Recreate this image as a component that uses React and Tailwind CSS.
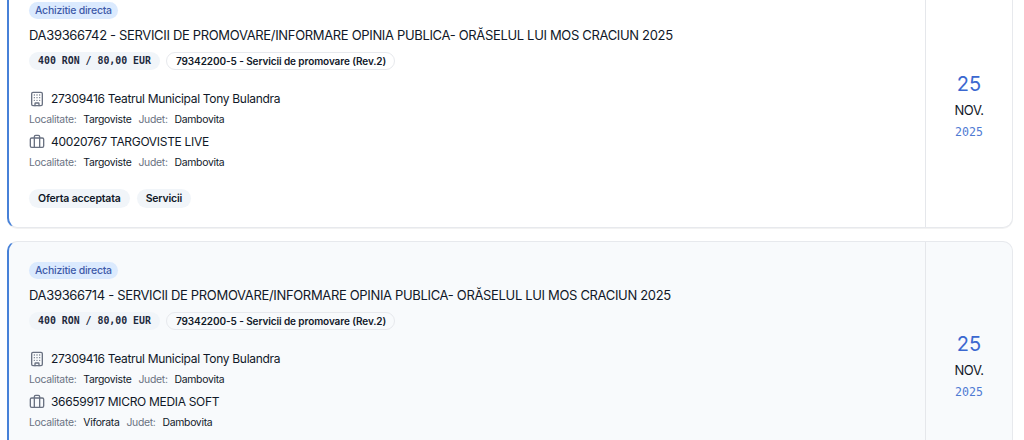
import React from "react";
import { Briefcase, Building } from "lucide-react";

const acquisitions = [
  {
    id: "DA39366742",
    title: "SERVICII DE PROMOVARE/INFORMARE OPINIA PUBLICA- ORĂSELUL LUI MOS CRACIUN 2025",
    authority: {
      name: "27309416 Teatrul Municipal Tony Bulandra",
      city: "Targoviste",
      county: "Dambovita",
    },
    supplier: {
      name: "40020767 TARGOVISTE LIVE",
      city: "Targoviste",
      county: "Dambovita",
    },
    tags: ["Oferta acceptata", "Servicii"],
  },
  {
    id: "DA39366714",
    title: "SERVICII DE PROMOVARE/INFORMARE OPINIA PUBLICA- ORĂSELUL LUI MOS CRACIUN 2025",
    authority: {
      name: "27309416 Teatrul Municipal Tony Bulandra",
      city: "Targoviste",
      county: "Dambovita",
    },
    supplier: {
      name: "36659917 MICRO MEDIA SOFT",
      city: "Viforata",
      county: "Dambovita",
    },
    tags: [],
  },
];

const App = () => {
  return (
    <div className="h-[440px] overflow-hidden bg-white font-['Inter',sans-serif] text-gray-900">
      <div className="-mt-[19px] flex flex-col gap-[13px] pl-[7px] pr-[11px]">
        {acquisitions.map((item) => (
          <AcquisitionCard key={item.id} item={item} />
        ))}
      </div>
    </div>
  );
};

const AcquisitionCard = ({ item }) => (
  <article className="flex h-[247px] shrink-0 rounded-[10px] border border-l-2 border-[#e7e9ed] border-l-[#4781d8] bg-white shadow-2xs even:bg-[#f8fafc]">
    <div className="flex min-w-0 flex-1 flex-col items-start pl-5 pt-5">
      <span className="flex h-[17px] items-center rounded-full bg-blue-100 px-[6px] text-[10.5px] font-medium tracking-[-0.24px] text-[#3f5ba9]">
        Achizitie directa
      </span>
      <h3 className="mt-[6px] whitespace-nowrap text-[13px] leading-5 tracking-[-0.335px]">
        {item.id} - {item.title}
      </h3>
      <div className="mt-[7px] flex gap-[6px]">
        <span className="flex h-[18px] items-center rounded-full bg-slate-100 px-[9px] font-['DejaVu_Sans_Mono',monospace] text-[9.9px] font-bold text-slate-800">
          400 RON / 80,00 EUR
        </span>
        <span className="flex h-[18px] items-center rounded-full border border-[#e7e9ed] pl-[9px] pr-[8px] text-[10px] font-semibold tracking-[-0.09px]">
          79342200-5 - Servicii de promovare (Rev.2)
        </span>
      </div>
      <div className="mt-[19px]">
        <Company icon={Building} company={item.authority} />
        <Company icon={Briefcase} company={item.supplier} />
      </div>
      <div className="mt-[14px] flex gap-[7px]">
        {item.tags.map((tag) => (
          <Tag key={tag}>{tag}</Tag>
        ))}
      </div>
    </div>
    <div className="flex w-[87px] flex-col items-center justify-center border-l border-gray-200 pt-[2px]">
      <span className="text-[20px] leading-7 text-[#3b68d0]">25</span>
      <span className="text-[13px] leading-6 tracking-[-0.4px]">NOV.</span>
      <span className="font-['DejaVu_Sans_Mono',monospace] text-[11.6px] leading-5 text-[#4f7bd3]">
        2025
      </span>
    </div>
  </article>
);

const Company = ({ icon: Icon, company }) => (
  <div className="h-[43px]">
    <div className="flex h-5 items-center gap-[6px] whitespace-nowrap text-[12px] tracking-[-0.31px]">
      <Icon size={16} strokeWidth={2} className="text-gray-500" />
      {company.name}
    </div>
    <div className="mt-[3px] flex h-4 items-center gap-[7px] whitespace-nowrap text-[10.4px] tracking-[-0.3px]">
      <span className="text-gray-500">Localitate:</span>
      <span>{company.city}</span>
      <span className="text-gray-500">Judet:</span>
      <span>{company.county}</span>
    </div>
  </div>
);

const Tag = ({ children }) => (
  <span className="flex h-[19px] items-center rounded-full bg-slate-100 px-[9px] text-[10.5px] font-semibold tracking-[-0.18px]">
    {children}
  </span>
);

export default App;
